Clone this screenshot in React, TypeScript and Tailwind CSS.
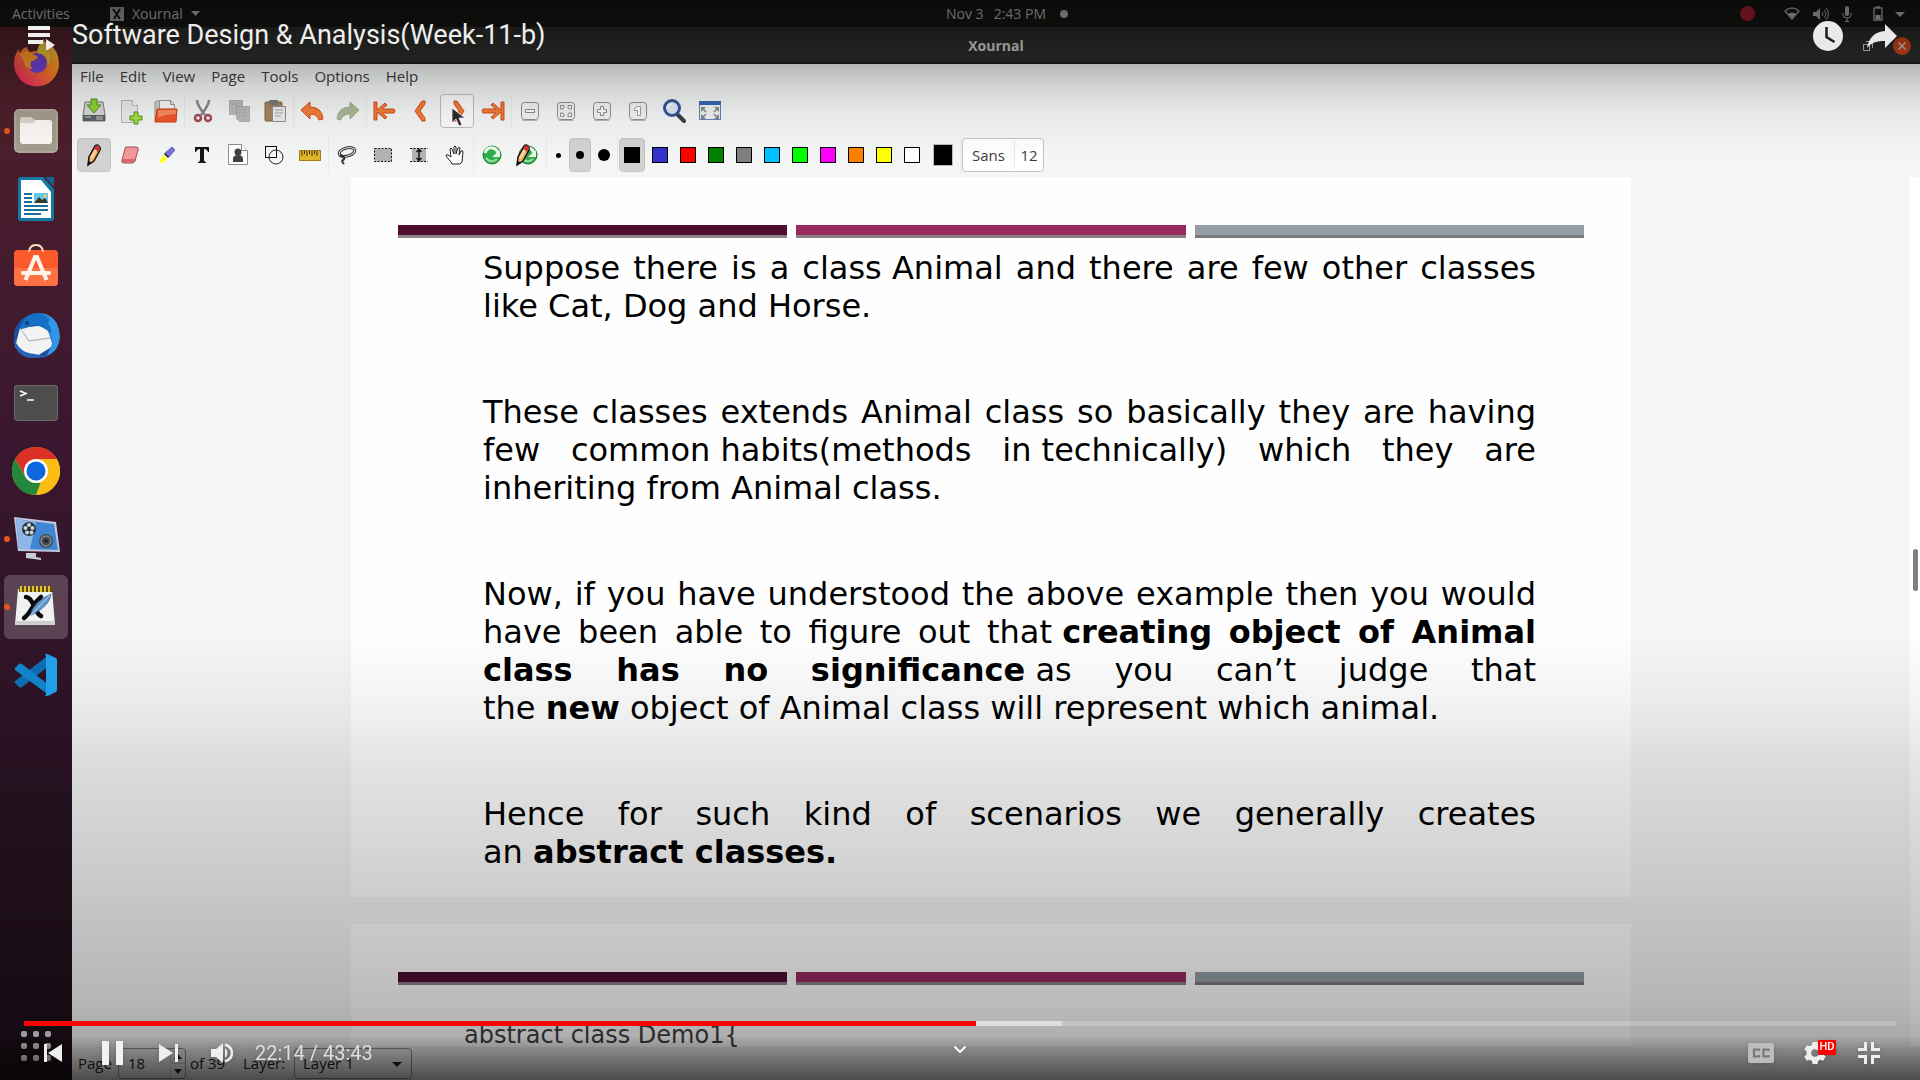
import React from "react";

type Kids = { children: React.ReactNode };

/* ---------- desktop top bar ---------- */

function TopBar() {
  return (
    <header className="grid h-[27px] shrink-0 grid-cols-[1fr_auto_1fr] items-center bg-[#161614] px-3 font-['Open_Sans',sans-serif] text-sm text-[#c0c0c0]">
      <div className="flex items-center">
        <button className="w-[98px] text-left">Activities</button>
        <button className="flex items-center gap-2">
          <svg width="14" height="14" viewBox="0 0 14 14" aria-hidden="true">
            <rect width="14" height="14" rx="1" fill="#a8a8a8" />
            <path d="M3 2l7 10M10 2L4 12" stroke="#161614" strokeWidth="2" />
          </svg>
          Xournal
          <svg width="9" height="5" viewBox="0 0 9 5" aria-hidden="true">
            <path d="M0 0h9L4.500 5z" fill="currentColor" />
          </svg>
        </button>
      </div>
      <button className="ml-[94px] flex items-center gap-[10px]">
        <span>Nov 3</span>
        <span>2:43 PM</span>
        <span className="ml-1 size-2 rounded-full bg-[#c0c0c0]" />
      </button>
      <div className="flex items-center justify-end gap-[13px] pr-[2px]">
        <span className="mr-4 h-[15px] w-[15px] rounded-full bg-[#b02030]" />
        <svg width="16" height="13" viewBox="0 0 16 13" aria-hidden="true">
          <path d="M1 4q7-6 14 0L8 12z" fill="none" stroke="#a8a8a8" strokeWidth="1.500" />
          <path d="M4 7q4-3 8 0l-4 5z" fill="#c0c0c0" />
        </svg>
        <svg width="16" height="14" viewBox="0 0 16 14" fill="none" stroke="#c0c0c0" aria-hidden="true">
          <path d="M0 5h3l4-4v12L3 9H0z" fill="#c0c0c0" stroke="none" />
          <path d="M9 5q2 2 0 4M11 3q4 4 0 8M13 1q5 6 0 12" />
        </svg>
        <svg width="10" height="16" viewBox="0 0 10 16" fill="none" stroke="#c0c0c0" aria-hidden="true">
          <rect x="3" y="0" width="4" height="10" rx="2" fill="#c0c0c0" stroke="none" />
          <path d="M1 7v2q0 3 4 3t4-3V7M5 12v4M3 15.500h4" />
        </svg>
        <svg width="33" height="15" viewBox="0 0 33 15" className="ml-2" aria-hidden="true">
          <path d="M1 2h8v12H1zM3 1h4" fill="none" stroke="#c0c0c0" strokeWidth="1.300" />
          <path d="M2.500 9h5v4h-5z" fill="#c0c0c0" />
          <path d="M22 6h10l-5 5z" fill="#c0c0c0" />
        </svg>
      </div>
    </header>
  );
}

/* ---------- dock ---------- */

const dockIcons: { name: string; running?: boolean; active?: boolean; art: React.ReactNode }[] = [
  {
    name: "Firefox",
    art: (
      <>
        <defs>
          <linearGradient id="fx" x1="1" y1="0" x2="0.200" y2="1">
            <stop offset="0" stopColor="#ffe14a" />
            <stop offset="0.450" stopColor="#ff8a1f" />
            <stop offset="1" stopColor="#f0246a" />
          </linearGradient>
        </defs>
        <path d="M31 0q4 5 5 8 1-2 0-4 11 7 11 21a22.500 22.500 0 0 1-45 0q0-9 5-15 0 3 1 4 2-5 7-6 0 3 3 5 4-1 7-1 2-6 6-12z" fill="url(#fx)" />
        <circle cx="25" cy="24" r="10" fill="#7542d8" />
        <path d="M8 15q7-5 12 0 5 1 6 4l-7 4q-2 4 2 7-8 0-9-8z" fill="#ff9a28" />
        <path d="M31 1q-7 8-5 13 10 1 10 12 5-7 0-14-5-4-5-11z" fill="#e8c53a" />
      </>
    ),
  },
  {
    name: "Files",
    running: true,
    art: (
      <>
        <rect x="2" y="2" width="44" height="44" rx="5" fill="#a39d8d" />
        <rect x="3" y="3" width="42" height="42" rx="4" fill="none" stroke="#b9b3a4" />
        <path d="M8 13q0-3 3-3h8l4 3h14q3 0 3 3v8H8z" fill="#dcd5cd" />
        <path d="M8 16h13l3-3h13q3 0 3 3v18q0 3-3 3H11q-3 0-3-3z" fill="#fbf8f5" />
      </>
    ),
  },
  {
    name: "LibreOffice Writer",
    art: (
      <>
        <path d="M9 2h22l11 12v29q0 3-3 3H9q-3 0-3-3V5q0-3 3-3z" fill="#1579a8" />
        <path d="M33 2h9v10z" fill="#14648e" />
        <path d="M9 5h20l10 12v26H9z" fill="#fff" />
        <path d="M12 19h8M12 23h8M12 27h8M12 31h24M12 35h24M12 39h17" stroke="#1b6e98" strokeWidth="2" />
        <rect x="22" y="18" width="14" height="10" fill="#69c4e8" />
        <path d="M22 28l5-6 3 3 3-2 3 5z" fill="#3a3a2c" />
        <circle cx="33" cy="21" r="1.500" fill="#ffd54a" />
      </>
    ),
  },
  {
    name: "Ubuntu Software",
    art: (
      <>
        <path d="M17 10q0-8 7-8t7 8" fill="none" stroke="#f2c9a0" strokeWidth="2" />
        <rect x="2" y="7" width="44" height="36" rx="4" fill="#fb5a2c" />
        <path d="M2 25h44v14q0 4-4 4H6q-4 0-4-4z" fill="#fd7142" />
        <path d="M17 9q1-7 7-7t7 7" fill="none" stroke="#f7dcbc" strokeWidth="1.500" />
        <path d="M13.500 37L23 14h2l9.500 23" fill="none" stroke="#fff5ea" strokeWidth="4" />
        <path d="M11 30h26" stroke="#fff5ea" strokeWidth="4" strokeLinecap="round" />
      </>
    ),
  },
  {
    name: "Thunderbird",
    art: (
      <>
        <circle cx="24" cy="25" r="22" fill="#1c4fa0" />
        <path d="M14 8q9-8 20-5 14 6 13 22-1 12-10 19 4-9 2-17L20 8z" fill="#2a8ee0" />
        <path d="M8 17l26-3 7 21-16 10Q10 44 3 36z" fill="#f3f3f3" />
        <path d="M8 17l9 13 21-3" fill="none" stroke="#b9bcc4" strokeWidth="1.300" />
        <path d="M8 18Q12 2 26 2q12 2 16 16l-4 4q-8-8-18-8-6 4-12 4z" fill="#1670c8" />
        <circle cx="15" cy="12" r="2" fill="#123a70" />
        <path d="M36 12q10 16-2 33 13-4 14-20-1-12-9-19z" fill="#3196e6" />
        <path d="M2 26q-1 17 15 21l20-1-14-3Q6 42 2 26z" fill="#2463b8" />
      </>
    ),
  },
  {
    name: "Terminal",
    art: (
      <>
        <rect x="2" y="6" width="44" height="36" rx="3" fill="#4d4d4b" />
        <rect x="2.500" y="6.500" width="43" height="35" rx="3" fill="none" stroke="#6a6a67" />
        <path d="M8 12l6 2.500-6 2.500" fill="none" stroke="#fff" strokeWidth="1.500" />
        <path d="M15 21h7" stroke="#fff" strokeWidth="1.500" />
      </>
    ),
  },
  {
    name: "Chrome",
    art: (
      <>
        <circle cx="24" cy="24" r="24" fill="#fbbc12" />
        <path d="M3.200 12A24 24 0 0 1 44.800 12H24L14 30z" fill="#dc3026" />
        <path d="M3.200 12L13.600 30Q18 36 24 36h4.400L24 48A24 24 0 0 1 3.200 12z" fill="#25883f" />
        <path d="M34.400 30L24 48A24 24 0 0 0 44.800 12H24z" fill="#fbbc12" />
        <circle cx="24" cy="24" r="12" fill="#fff" />
        <circle cx="24" cy="24" r="9.500" fill="#0d67dd" />
      </>
    ),
  },
  {
    name: "Screen recorder",
    running: true,
    art: (
      <>
        <path d="M2 2l42 5 4 30-42-1z" fill="#c3c9dc" />
        <path d="M4 4l38 5 4 26-39-1z" fill="#3f87d5" />
        <path d="M4 4l20 3-6 27H7z" fill="#8eb6e6" />
        <circle cx="17" cy="14" r="7" fill="#2b3036" />
        <g fill="#c5d5e5">
          <circle cx="17" cy="10" r="2" />
          <circle cx="13.500" cy="13" r="2" />
          <circle cx="20.500" cy="13" r="2" />
          <circle cx="15" cy="17.500" r="2" />
          <circle cx="19.500" cy="17.500" r="2" />
        </g>
        <circle cx="34" cy="26" r="7" fill="#444b50" />
        <circle cx="34" cy="26" r="5" fill="none" stroke="#a5adb2" />
        <circle cx="34" cy="26" r="2" fill="#20252a" />
        <path d="M14 38h10v4l5 1v2l-15-2z" fill="#c8cbd0" />
      </>
    ),
  },
  {
    name: "Xournal",
    running: true,
    active: true,
    art: (
      <>
        <path d="M6 6h34l3 36H3z" fill="#f1f1f1" />
        <path d="M3 38h40v4H3z" fill="#cfcfcf" />
        <path d="M7 4h34v5H7z" fill="#5c4a10" />
        <path d="M9 3v6M13 3v6M17 3v6M21 3v6M25 3v6M29 3v6M33 3v6M37 3v6" stroke="#e3c32e" strokeWidth="2" />
        <path d="M14 14q4 0 8 9t7 10M29 14q-5 4-9 11t-8 10" fill="none" stroke="#0b0b0b" strokeWidth="4.500" strokeLinecap="round" />
        <path d="M39 11q-1 11-16 19l-5 3q3-14 21-22z" fill="#5e93cc" stroke="#33618f" strokeWidth="0.700" />
        <path d="M38 12L18 33" stroke="#c9e0f4" />
      </>
    ),
  },
  {
    name: "Visual Studio Code",
    art: (
      <>
        <path d="M3 32l4 4q1 1 3 0l28-22V3L3 30q-1 1 0 2z" fill="#0d6fb4" />
        <path d="M3 17l4-4q1-1 3 0l28 22v10L3 19q-1-1 0-2z" fill="#1287d0" />
        <path d="M33 3l2 0 9 4q1 1 1 2v30q0 1-1 2l-9 4h-2q1-1 1-2V5z" fill="#22a4f0" />
      </>
    ),
  },
];

function Dock() {
  return (
    <nav aria-label="Dock" className="flex w-[72px] shrink-0 flex-col bg-linear-to-b from-[#52202a] via-[#3a1730] via-40% to-[#1c0f18]">
      <div className="flex flex-col items-center gap-1 pt-1">
        {dockIcons.map((d) => (
          <button
            key={d.name}
            aria-label={d.name}
            className={
              d.active
                ? "relative flex size-16 items-center justify-center rounded-md bg-white/20"
                : "relative flex size-16 items-center justify-center rounded-md"
            }
          >
            {d.running && <span className="absolute top-[29px] left-0 size-[6px] rounded-full bg-[#e95420]" />}
            <svg width="48" height="48" viewBox="0 0 48 48" aria-hidden="true">
              {d.art}
            </svg>
          </button>
        ))}
      </div>
      <div className="flex-1" />
      <button aria-label="Show applications" className="mb-[19px] ml-[21px] grid w-[30px] grid-cols-3 gap-[6px]">
        {Array.from({ length: 9 }, (_, i) => (
          <span key={i} className="size-[6px] rounded-xs bg-[#e6dfe4]" />
        ))}
      </button>
    </nav>
  );
}

/* ---------- toolbar pieces ---------- */

const orange = { fill: "#f47b3a", stroke: "#cf4f17", strokeWidth: 1, strokeLinejoin: "round" as const };

function Glyph({ children }: Kids) {
  return (
    <svg width="24" height="24" viewBox="0 0 24 24" className="overflow-visible" aria-hidden="true">
      {children}
    </svg>
  );
}

function Tool({ label, children, on, hover }: Kids & { label: string; on?: boolean; hover?: boolean }) {
  return (
    <button
      aria-label={label}
      className={
        on
          ? "mx-px flex size-[34px] items-center justify-center rounded-sm border border-[#c6c6c6] bg-[#d3d2d2]"
          : hover
            ? "mx-px flex size-[34px] items-center justify-center rounded-sm border border-[#bdbdbd] bg-[#fbfbfb]"
            : "mx-px flex size-[34px] items-center justify-center"
      }
    >
      <Glyph>{children}</Glyph>
    </button>
  );
}

function Sep() {
  return <span className="h-9 w-px shrink-0 bg-[#ebebeb]" />;
}

function ZoomFrame() {
  return (
    <>
      <rect x="3.500" y="3.500" width="17" height="17" rx="3" fill="#f2f2f2" stroke="#8b8d8a" />
      <path d="M5 21.500h14" stroke="#b5b7b4" />
    </>
  );
}

function Pencil() {
  return (
    <>
      <path d="M6 22l1-8 6-11q2-2 4 0t1 4l-6 11z" fill="#f0b36a" stroke="#111" strokeWidth="1.500" />
      <path d="M13 4q2-3 4-1t0 4l-1 2-4-3z" fill="#c8352e" />
      <path d="M9 15l5-8" stroke="#fbe3b0" strokeWidth="1.500" />
      <path d="M6 22l1-4 3 2z" fill="#111" />
    </>
  );
}

function Recycle() {
  return (
    <>
      <circle cx="12" cy="12" r="9" fill="#2fab4c" stroke="#1a7c34" />
      <path d="M5 10q2-6 8-5 4 1 5 5" fill="none" stroke="#eafbe9" strokeWidth="3" />
      <path d="M20 7v7h-8z" fill="#eafbe9" />
      <path d="M6 15q5 6 11 1" fill="none" stroke="#8fe09c" strokeWidth="2" />
    </>
  );
}

function MainToolbar() {
  return (
    <div role="toolbar" aria-label="Main" className="flex h-11 items-center pl-1">
      <Tool label="Save">
        <path d="M3 3h18l2 13v6H1v-6z" fill="#d6d8d5" stroke="#75777a" />
        <path d="M1 16h22v6H1z" fill="#5d6063" />
        <path d="M3 18h6M14 18h7M14 20h7" stroke="#c9cbcc" />
        <path d="M9 0h6v6h4l-7 8-7-8h4z" fill="#8fd13c" stroke="#4f8f12" />
      </Tool>
      <Tool label="New">
        <path d="M3.500 1.500h11l5 5v17h-16z" fill="#e9eae9" stroke="#b4b6b4" />
        <path d="M14.500 1.500v5h5" fill="#fff" stroke="#b4b6b4" />
        <path d="M16 13h4v4h4v4h-4v4h-4v-4h-4v-4h4z" fill="#a5dc4d" stroke="#4e9a06" />
      </Tool>
      <Tool label="Open">
        <path d="M1 22V4q0-2 2-2h7v7z" fill="#cfd0cd" stroke="#999" />
        <path d="M5.500 12V1.500h11l4 4V12" fill="#f6f6f6" stroke="#989a98" />
        <path d="M16.500 1.500v4h4" fill="none" stroke="#989a98" />
        <path d="M3 10h20l-1 13H1z" fill="#f0562b" stroke="#cf3c12" />
        <path d="M4 11h18v4q-9 0-18 3z" fill="#fb8a62" />
      </Tool>
      <Sep />
      <Tool label="Cut">
        <path d="M6 1q0 5 8 15M18 1q0 5-8 15" fill="none" stroke="#85888a" strokeWidth="2.500" />
        <circle cx="7" cy="19" r="3" fill="none" stroke="#a34b55" strokeWidth="2.500" />
        <circle cx="17" cy="19" r="3" fill="none" stroke="#a34b55" strokeWidth="2.500" />
      </Tool>
      <Tool label="Copy">
        <rect x="2.500" y="1.500" width="13" height="14" fill="#b9bab9" stroke="#8c8e8c" strokeDasharray="1 1" />
        <path d="M9.500 7.500h13v15h-10l-3-3z" fill="#b9bab9" stroke="#858785" strokeDasharray="1 1" />
        <path d="M12 11h8M12 14h8M12 17h8M5 5h8" stroke="#989a98" strokeDasharray="1 1" />
      </Tool>
      <Tool label="Paste">
        <rect x="2" y="3" width="17" height="19" rx="1" fill="#a6845c" stroke="#7d6546" />
        <rect x="6" y="1" width="9" height="5" rx="1" fill="#77797a" />
        <path d="M9.500 7.500h13v15h-13z" fill="#eceded" stroke="#8d8f8d" />
        <path d="M12 11h8M12 14h8M12 17h6" stroke="#a4a6a4" />
      </Tool>
      <Sep />
      <Tool label="Undo">
        <path d="M1 11l9-8v5q12 0 13 12l-4 1q-2-6-9-6v5z" {...orange} />
      </Tool>
      <Tool label="Redo">
        <path d="M23 11l-9-8v5Q2 8 1 20l4 1q2-6 9-6v5z" fill="#a9b996" stroke="#75865f" strokeDasharray="1 1" />
      </Tool>
      <Sep />
      <Tool label="First page">
        <path d="M1 3h3v8l8-7 2 2-5 4h12q2 2 0 4H9l5 4-2 2-8-7v8H1z" {...orange} />
      </Tool>
      <Tool label="Previous page">
        <path d="M13 2h3v3l-5 7 5 7v3h-3L6 12z" {...orange} />
      </Tool>
      <Tool label="Next page" hover>
        <path d="M9 2h3l7 10-7 10H9v-3l5-7-5-7z" {...orange} />
        <path d="M7 9v15l4-4 3 7 3-1-3-7h6z" fill="#2c2c2c" stroke="#fff" strokeWidth="0.800" />
      </Tool>
      <Tool label="Last page">
        <path d="M23 3h-3v8l-8-7-2 2 5 4H2q-2 2 0 4h13l-5 4 2 2 8-7v8h3z" {...orange} />
      </Tool>
      <Sep />
      <Tool label="Zoom out">
        <ZoomFrame />
        <rect x="7.500" y="10.500" width="9" height="3" fill="#fff" stroke="#8b8d8a" />
      </Tool>
      <Tool label="Page width">
        <ZoomFrame />
        <path d="M6.500 10V6.500H10V9H9v1zM14 6.500h3.500V10H15V9h-1zM6.500 14v3.500H10V15H9v-1zM14 17.500h3.500V14H15v1h-1z" fill="#fff" stroke="#8b8d8a" />
      </Tool>
      <Tool label="Zoom in">
        <ZoomFrame />
        <path d="M10.500 7.500h3v3h3v3h-3v3h-3v-3h-3v-3h3z" fill="#fff" stroke="#8b8d8a" />
      </Tool>
      <Tool label="Normal size">
        <ZoomFrame />
        <path d="M11.500 7.500h3v9h-3v-5h-3v-2z" fill="#fff" stroke="#9b9d9a" />
      </Tool>
      <Tool label="Set zoom">
        <path d="M14 14l8 8" stroke="#3f3f3f" strokeWidth="4" strokeLinecap="round" />
        <circle cx="10" cy="9" r="7.500" fill="#dde8f2" stroke="#35549a" strokeWidth="3" />
        <path d="M6 9q0-4 4-4" fill="none" stroke="#fff" strokeWidth="1.500" />
      </Tool>
      <Tool label="Fullscreen">
        <rect x="1.500" y="2.500" width="21" height="18" fill="#eef0f1" stroke="#5b83bd" />
        <path d="M1 2h22v4H1z" fill="#3566b5" />
        <path d="M3 8h5L3 13zM21 8h-5l5 5zM3 20h5l-5-5zM21 20h-5l5-5z" fill="#85878a" />
        <path d="M4 9l4 4M20 9l-4 4M4 19l4-4M20 19l-4-4" stroke="#85878a" strokeWidth="1.500" />
      </Tool>
    </div>
  );
}

const penColors = [
  { name: "Blue", cls: "size-4 border border-black bg-[#3333cc]" },
  { name: "Red", cls: "size-4 border border-black bg-[#ff0000]" },
  { name: "Green", cls: "size-4 border border-black bg-[#008000]" },
  { name: "Gray", cls: "size-4 border border-black bg-[#808080]" },
  { name: "Light blue", cls: "size-4 border border-black bg-[#00c0ff]" },
  { name: "Light green", cls: "size-4 border border-black bg-[#00ff00]" },
  { name: "Magenta", cls: "size-4 border border-black bg-[#ff00ff]" },
  { name: "Orange", cls: "size-4 border border-black bg-[#ff8000]" },
  { name: "Yellow", cls: "size-4 border border-black bg-[#ffff00]" },
  { name: "White", cls: "size-4 border border-black bg-white" },
];

function PenToolbar() {
  return (
    <div role="toolbar" aria-label="Pen" className="flex h-11 items-center pl-1">
      <Tool label="Pencil" on>
        <Pencil />
      </Tool>
      <Tool label="Eraser">
        <path d="M8 4h10q3 0 2 3l-3 11q-1 2-3 2H6q-3 0-2-3L7 6q0-2 1-2z" fill="#f2989c" stroke="#a84b50" />
        <path d="M5 16h12l-1 3H5z" fill="#d9676d" />
      </Tool>
      <Tool label="Highlighter">
        <path d="M11 10l7-6 3 3-6 7z" fill="#7474e0" stroke="#4a4a9e" strokeWidth="0.700" />
        <path d="M11 10l4 4-1 1-4-4z" fill="#222" />
        <path d="M9 12l4 4-5 4H5z" fill="#ffff10" />
      </Tool>
      <Tool label="Text">
        <path d="M5 4h14v5h-1q-1-3-4-3v11q0 2 2 2v1H8v-1q2 0 2-2V6q-3 0-4 3H5z" fill="#151515" />
      </Tool>
      <Tool label="Image">
        <path d="M2.500 1.500h13l6 6v14h-19z" fill="#fff" stroke="#8d8f8d" />
        <path d="M15.500 1.500v6h6" fill="#fff" stroke="#8d8f8d" />
        <circle cx="12" cy="9" r="3.500" fill="#3e4143" />
        <path d="M7 19v-3q0-4 5-4t5 4v3z" fill="#3e4143" />
      </Tool>
      <Tool label="Shapes">
        <rect x="3.500" y="3.500" width="11" height="11" fill="none" stroke="#111" />
        <circle cx="14" cy="14" r="7" fill="none" stroke="#222" />
      </Tool>
      <Tool label="Ruler">
        <rect x="1.500" y="7.500" width="21" height="10" fill="#e0b62c" stroke="#a8801a" />
        <path d="M4 8v5M6.500 8v3M9 8v5M11.500 8v3M14 8v5M16.500 8v3M19 8v5" stroke="#3c2d06" />
      </Tool>
      <Sep />
      <Tool label="Select region">
        <ellipse cx="12" cy="9" rx="8" ry="4" fill="none" stroke="#333" strokeWidth="3" transform="rotate(-15 12 9)" />
        <ellipse cx="12" cy="9" rx="8" ry="4" fill="none" stroke="#eee" strokeWidth="1" transform="rotate(-15 12 9)" />
        <path d="M5 12l4 2q1 2-1 3t1 4" fill="none" stroke="#333" strokeWidth="2" />
      </Tool>
      <Tool label="Select rectangle">
        <rect x="3.500" y="5.500" width="17" height="13" fill="#b3b3b3" stroke="#111" strokeDasharray="2 1.500" />
      </Tool>
      <Tool label="Vertical space">
        <rect x="5" y="5" width="14" height="14" fill="#b3b3b3" />
        <path d="M3 5.500h18M3 18.500h18" stroke="#111" strokeDasharray="2 1.500" />
        <path d="M12 7v10M9.500 9L12 6.500 14.500 9M9.500 15l2.500 2.500 2.500-2.500" fill="none" stroke="#111" strokeWidth="1.500" />
      </Tool>
      <Tool label="Hand">
        <path d="M8 19l-5-6q0-2 2-1l3 2-1-8q1-2 2 0l2 5V4q1-2 2 0v7l2-6q1-1 2 0l-1 7 2-4q2-1 2 1l-1 10-2 2H9z" fill="#fff" stroke="#222" />
      </Tool>
      <Sep />
      <Tool label="Default">
        <Recycle />
      </Tool>
      <Tool label="Default pen">
        <Recycle />
        <g transform="translate(-5 0)">
          <Pencil />
        </g>
      </Tool>
      <Sep />
      <button aria-label="Fine" className="flex h-[34px] w-[22px] items-center justify-center">
        <span className="size-[5px] rounded-full bg-black" />
      </button>
      <button aria-label="Medium" className="flex h-[34px] w-[22px] items-center justify-center rounded-sm border border-[#c6c6c6] bg-[#d3d2d2]">
        <span className="size-2 rounded-full bg-black" />
      </button>
      <button aria-label="Thick" className="flex h-[34px] w-[26px] items-center justify-center">
        <span className="size-3 rounded-full bg-black" />
      </button>
      <Sep />
      <button aria-label="Black" className="mx-px flex h-[34px] w-[26px] items-center justify-center rounded-sm border border-[#c6c6c6] bg-[#d3d2d2]">
        <span className="size-4 bg-black" />
      </button>
      {penColors.map((c) => (
        <button key={c.name} aria-label={c.name} className="flex h-[34px] w-7 items-center justify-center">
          <span className={c.cls} />
        </button>
      ))}
      <button aria-label="Choose color" className="flex h-[34px] w-[34px] items-center justify-center">
        <span className="h-[22px] w-5 border border-[#bbb] bg-black" />
      </button>
      <Sep />
      <button className="mx-px flex h-[34px] items-center rounded-sm border border-[#c4c4c4] bg-white text-[15px] text-[#3d3d3d]">
        <span className="w-[51px] text-center">Sans</span>
        <span className="h-7 w-px bg-[#e8e8e8]" />
        <span className="w-7 text-center">12</span>
      </button>
    </div>
  );
}

/* ---------- document ---------- */

function SlideBars() {
  return (
    <div className="grid grid-cols-3 gap-[9px] px-[47px] pt-12" aria-hidden="true">
      <span className="h-[13px] border-b-3 border-[#8a8288] bg-[#4f0e31]" />
      <span className="h-[13px] border-b-3 border-[#8a8288] bg-[#982a60]" />
      <span className="h-[13px] border-b-3 border-[#7b7879] bg-[#949da3]" />
    </div>
  );
}

function Line({ children }: Kids) {
  return <span className="block text-justify [text-align-last:justify]">{children}</span>;
}

function Keep({ children }: Kids) {
  return <span className="inline-block whitespace-nowrap">{children}</span>;
}

function Slides() {
  return (
    <main className="relative flex min-h-0 flex-1 overflow-hidden bg-[#f4f6f6]">
      <div className="flex min-w-0 flex-1 flex-col items-center gap-[27px]">
        <article className="h-[720px] w-full max-w-[1280px] shrink-0 bg-[#fefefe]">
          <SlideBars />
          <div className="flex flex-col gap-[68px] pt-[11px] pr-[95px] pl-[132px] font-['DejaVu_Sans',sans-serif] text-[32px] leading-[38px] text-black">
            <p>
              <Line>
                Suppose there is a <Keep>class Animal</Keep> and there are few other classes
              </Line>
              like Cat, Dog and Horse.
            </p>
            <p>
              <Line>These classes extends Animal class so basically they are having</Line>
              <Line>
                few <Keep>common habits(methods</Keep> <Keep>in technically)</Keep> which they are
              </Line>
              inheriting from Animal class.
            </p>
            <p>
              <Line>Now, if you have understood the above example then you would</Line>
              <Line>
                have been able to figure out{" "}
                <Keep>
                  that <b>creating</b>
                </Keep>{" "}
                <b>object of Animal</b>
              </Line>
              <Line>
                <b>class has no</b>{" "}
                <Keep>
                  <b>significance</b> as
                </Keep>{" "}
                you can’t judge that
              </Line>
              the <b>new</b> object of Animal class will represent which animal.
            </p>
            <p>
              <Line>Hence for such kind of scenarios we generally creates</Line>
              an <b>abstract classes.</b>
            </p>
          </div>
        </article>
        <article className="h-[720px] w-full max-w-[1280px] shrink-0 bg-[#fefefe]">
          <SlideBars />
          <p className="pt-[36px] pl-[113px] font-['DejaVu_Sans',sans-serif] text-2xl leading-7 text-[#404040]">
            abstract class Demo1{"{"}
          </p>
        </article>
      </div>
      <div className="flex w-[10px] shrink-0 flex-col items-center bg-white pt-[372px]">
        <span className="h-[42px] w-[5px] rounded-full bg-[#7d7f80]" />
      </div>
    </main>
  );
}

function StatusBar() {
  return (
    <footer className="flex h-[33px] shrink-0 items-center bg-[#f0f0f0] pl-[6px] text-[15px] text-[#202020]">
      <label htmlFor="page" className="w-10">
        Page
      </label>
      <div className="flex h-[31px] w-[68px] rounded-sm border border-[#8f8f8f]">
        <input id="page" defaultValue="18" className="w-[51px] min-w-0 bg-transparent pl-[9px]" />
        <div className="flex flex-1 flex-col border-l border-[#ccc] text-[#202020]">
          <button aria-label="Next" className="flex flex-1 items-center justify-center">
            <svg width="8" height="5" viewBox="0 0 8 5" aria-hidden="true">
              <path d="M0 5h8L4 0z" fill="currentColor" />
            </svg>
          </button>
          <button aria-label="Previous" className="flex flex-1 items-center justify-center border-t border-[#ccc]">
            <svg width="8" height="5" viewBox="0 0 8 5" aria-hidden="true">
              <path d="M0 0h8L4 5z" fill="currentColor" />
            </svg>
          </button>
        </div>
      </div>
      <span className="ml-1 w-[53px]">of 39</span>
      <label htmlFor="layer" className="w-[51px]">
        Layer:
      </label>
      <div className="relative">
        <select id="layer" className="h-[31px] w-[118px] appearance-none rounded-sm border border-[#8f8f8f] bg-transparent pl-2">
          <option>Layer 1</option>
        </select>
        <svg width="10" height="5" viewBox="0 0 10 5" className="pointer-events-none absolute top-[14px] right-[10px]" aria-hidden="true">
          <path d="M0 0h10L5 5z" fill="currentColor" />
        </svg>
      </div>
    </footer>
  );
}

const menus = ["File", "Edit", "View", "Page", "Tools", "Options", "Help"];

function XournalWindow() {
  return (
    <section aria-label="Xournal" className="flex min-w-0 flex-1 flex-col bg-[#f4f5f5] font-['Open_Sans',sans-serif]">
      <div className="grid h-[37px] shrink-0 grid-cols-[1fr_auto_1fr] items-center border-b-2 border-[#1e1e1e] bg-linear-to-b from-[#2b2b29] to-[#303030] px-[9px] pt-[2px]">
        <span />
        <h1 className="text-sm font-bold text-[#dedede]">Xournal</h1>
        <div className="flex items-center justify-end gap-5">
          <button aria-label="Restore">
            <svg width="10" height="10" viewBox="0 0 10 10" fill="none" stroke="#dedede" aria-hidden="true">
              <path d="M0.500 3.500h6v6h-6zM3 0.500h6.500V7" />
            </svg>
          </button>
          <button aria-label="Close window" className="flex size-[18px] items-center justify-center rounded-full bg-[#d9481d]">
            <svg width="8" height="8" viewBox="0 0 8 8" stroke="#e8d8d0" strokeWidth="1.500" aria-hidden="true">
              <path d="M0.500 0.500l7 7M7.500 0.500l-7 7" />
            </svg>
          </button>
        </div>
      </div>
      <div role="menubar" className="flex h-[25px] shrink-0 items-center gap-4 pl-2 text-[15px] text-[#3d3d3d]">
        {menus.map((m) => (
          <button key={m} role="menuitem">
            {m}
          </button>
        ))}
      </div>
      <MainToolbar />
      <PenToolbar />
      <Slides />
      <StatusBar />
    </section>
  );
}

/* ---------- video player overlay ---------- */

const played = 50.85;
const buffered = 55.45;

function PlayerOverlay() {
  return (
    <div className="absolute inset-0 flex flex-col justify-between overflow-hidden text-[#eeeeee]">
      <div className="h-40 bg-[linear-gradient(to_bottom,rgba(0,0,0,0.5)_0,rgba(0,0,0,0.25)_64px,rgba(0,0,0,0.13)_88px,rgba(0,0,0,0.05)_115px,rgba(0,0,0,0)_160px)]">
        <div className="flex h-[72px] items-center pr-[23px] pl-7 font-['Roboto',sans-serif]">
          <button aria-label="Playlist">
            <svg width="28" height="24" viewBox="0 0 28 24" fill="#eee" className="mt-1" aria-hidden="true">
              <path d="M0 0h22v4H0zM0 7h22v4H0zM0 14h15v4H0zM18 13v12l9-6z" />
            </svg>
          </button>
          <h2 className="ml-4 flex-1 pb-[2px] text-[27px] leading-8">Software Design &amp; Analysis(Week-11-b)</h2>
          <button aria-label="Watch later">
            <svg width="30" height="30" viewBox="0 0 30 30" aria-hidden="true">
              <circle cx="15" cy="15" r="15" fill="#e9e9e9" />
              <path d="M13.500 6v10l8 5" fill="none" stroke="#1b1b1b" strokeWidth="2.500" />
            </svg>
          </button>
          <button aria-label="Share" className="ml-6">
            <svg width="30" height="24" viewBox="0 0 30 24" fill="#e9e9e9" aria-hidden="true">
              <path d="M18 0l12 12-12 12v-7Q6 16 0 24 3 8 18 7z" />
            </svg>
          </button>
        </div>
      </div>
      <div className="flex h-[450px] flex-col justify-end bg-[linear-gradient(to_bottom,rgba(0,0,0,0)_0,rgba(0,0,0,0.05)_80px,rgba(0,0,0,0.11)_140px,rgba(0,0,0,0.18)_250px,rgba(0,0,0,0.26)_370px,rgba(0,0,0,0.31)_406px,rgba(0,0,0,0.42)_417px,rgba(0,0,0,0.69)_450px)]">
        <div className="relative mx-6 h-[5px] bg-white/20">
          <div className="absolute inset-y-0 left-0 bg-white/45" style={{ width: `${buffered}%` }} />
          <div className="absolute inset-y-0 left-0 bg-[#ff0000]" style={{ width: `${played}%` }} />
          <input
            type="range"
            aria-label="Seek"
            min={0}
            max={2623}
            defaultValue={1334}
            className="absolute inset-0 h-full w-full cursor-pointer opacity-0"
          />
        </div>
        <div className="grid h-[54px] grid-cols-[1fr_auto_1fr] items-center px-10 font-['Roboto',sans-serif]">
          <div className="flex items-center pl-1 drop-shadow-sm">
            <button aria-label="Previous video">
              <svg width="18" height="18" viewBox="0 0 18 18" fill="#eee" aria-hidden="true">
                <path d="M0 0h3v18H0zM18 0v18L4 9z" />
              </svg>
            </button>
            <button aria-label="Pause" className="ml-10">
              <svg width="21" height="24" viewBox="0 0 21 24" fill="#f2f2f2" aria-hidden="true">
                <path d="M0 0h7v24H0zM14 0h7v24h-7z" />
              </svg>
            </button>
            <button aria-label="Next video" className="ml-9">
              <svg width="20" height="18" viewBox="0 0 20 18" fill="#eee" aria-hidden="true">
                <path d="M0 0l14 9-14 9zM16 0h3v18h-3z" />
              </svg>
            </button>
            <button aria-label="Mute" className="ml-8">
              <svg width="22" height="20" viewBox="0 0 22 20" aria-hidden="true">
                <path d="M0 6h5l7-6v20l-7-6H0z" fill="#eee" />
                <path d="M14 5q5 5 0 10z" fill="#eee" />
                <path d="M14 1.500q7 2.500 7 8.500t-7 8.500" fill="none" stroke="#eee" strokeWidth="2.500" />
              </svg>
            </button>
            <span className="ml-[22px] text-xl text-[#dddddd]">22:14 / 43:43</span>
          </div>
          <button aria-label="More videos" className="pb-2">
            <svg width="12" height="7" viewBox="0 0 12 7" fill="none" stroke="#fff" strokeWidth="2" aria-hidden="true">
              <path d="M0.500 0.500L6 6l5.500-5.500" />
            </svg>
          </button>
          <div className="flex items-center justify-end drop-shadow-sm">
            <button aria-label="Subtitles">
              <svg width="26" height="20" viewBox="0 0 26 20" aria-hidden="true">
                <rect width="26" height="20" rx="2" fill="#bdbdbd" />
                <path d="M11 8V6.500H6v7h5V12M20.500 8V6.500h-5v7h5V12" fill="none" stroke="#787878" strokeWidth="2.200" />
              </svg>
            </button>
            <button aria-label="Settings" className="relative ml-[30px]">
              <svg width="22" height="22" viewBox="0 0 22 22" aria-hidden="true">
                <path
                  fillRule="evenodd"
                  fill="#eee"
                  d="M8.500 0h5l.7 3 2 1.200 3-1 2.500 4.300-2.300 2v3l2.300 2-2.500 4.300-3-1-2 1.200-.7 3h-5l-.7-3-2-1.200-3 1L.3 14.500l2.300-2v-3l-2.300-2 2.500-4.300 3 1 2-1.200zM11 7.200a3.800 3.800 0 1 0 0 7.600 3.800 3.800 0 0 0 0-7.600z"
                />
              </svg>
              <span className="absolute -top-[2px] left-[14px] flex h-[15px] w-[18px] items-center justify-center rounded-[1px] bg-[#ff0000] text-[11px] font-medium text-white">
                HD
              </span>
            </button>
            <button aria-label="Exit full screen" className="ml-8">
              <svg width="22" height="22" viewBox="0 0 22 22" fill="none" stroke="#eee" strokeWidth="3" aria-hidden="true">
                <path d="M0 7.500h7.500V0M14.500 0v7.500H22M0 14.500h7.500V22M14.500 22v-7.500H22" />
              </svg>
            </button>
          </div>
        </div>
      </div>
    </div>
  );
}

export default function App() {
  return (
    <div className="relative flex h-screen flex-col overflow-hidden bg-black">
      <TopBar />
      <div className="flex min-h-0 flex-1">
        <Dock />
        <XournalWindow />
      </div>
      <PlayerOverlay />
    </div>
  );
}
